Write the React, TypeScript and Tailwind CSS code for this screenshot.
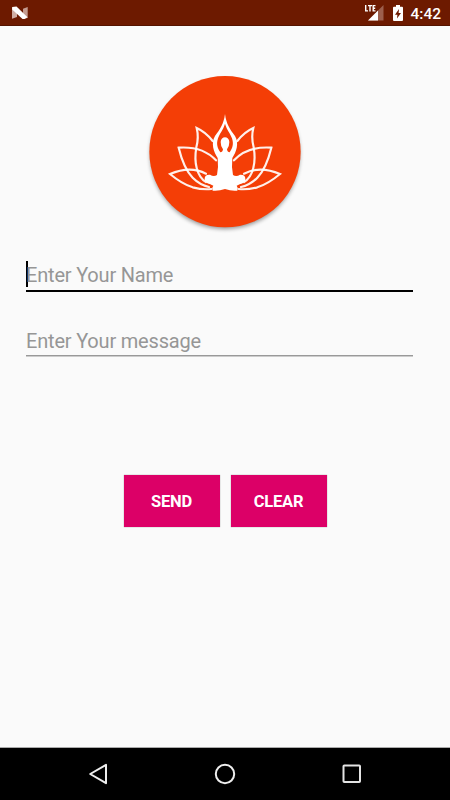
function NougatIcon() {
  return (
    <svg width="18" height="14" viewBox="0 0 18 14" className="block">
      <path d="M1 1.300 6 3v8L1 12.700z" fill="#d0aea4" />
      <path d="M12 2.800 16.700 1v11L12 12.700z" fill="#c49c90" />
      <path d="M1.200 1.100 5.500 .5 16.500 11.300 13.500 13 11.500 12.900 1.200 3.600z" fill="#fff" />
    </svg>
  );
}

function SignalIcon() {
  return (
    <svg width="20" height="18" viewBox="0 0 20 18" className="block">
      <path d="M19.500 1v15.500H4z" fill="#9c5f4d" />
      <path d="M14 6.500v10H4z" fill="#fff" />
      <path d="M0 0h12v8.500H0z" fill="#6d1a00" />
      <path d="M1.700 1v5.900h2.300M4 1.600h4M6 1.600v5.900M11.500 1.600H9.200v5.300h2.300M9.200 4.200h2" fill="none" stroke="#fff" strokeWidth="1.400" />
    </svg>
  );
}

function BatteryIcon() {
  return (
    <svg width="10" height="16" viewBox="0 0 10 16" className="block">
      <path d="M3 0h4v1.700h2q1 0 1 1v12.300q0 1-1 1H1q-1 0-1-1V2.700q0-1 1-1h2z" fill="#fff" />
      <path d="M6 4 2 9.700h2.400L4 13.500 8 7.900H5.600z" fill="#6d1a00" />
    </svg>
  );
}

function Petals() {
  return (
    <g fill="none" stroke="#fff" strokeOpacity=".92" strokeWidth="6.500" strokeLinejoin="miter" strokeLinecap="round">
      <path d="M218 213Q197 186 170 174Q177 202 169 232C161 278 171 321 198 336" />
      <path d="M228 271Q188 228 116 233Q131 295 158 323Q179 344 207 351" />
      <path d="M198 311Q150 286 90 312Q126 342 158 352Q188 360 214 357" />
    </g>
  );
}

function Logo() {
  return (
    <svg width="170" height="170" viewBox="0 0 510 510" className="block">
      <defs>
        <filter id="shade" x="-10%" y="-10%" width="120%" height="120%">
          <feGaussianBlur stdDeviation="6" />
        </filter>
      </defs>
      <circle cx="255" cy="253" r="224" fill="#000" opacity=".42" filter="url(#shade)" />
      <circle cx="255" cy="245" r="227" fill="#f43e06" />
      <Petals />
      <g transform="matrix(-1 0 0 1 510 0)">
        <Petals />
      </g>
      <path
        fill="#fff"
        d="M255 132C259 163 270 178 285 198C298 219 289 246 277 264Q274 292 279 315Q289 321 300 314Q316 313 316 326Q316 339 299 343L290 347Q296 354 292 362Q274 364 255 357Q236 364 218 362Q214 354 220 347L211 343Q194 339 194 326Q194 313 210 314Q221 321 231 315Q236 292 233 264C221 246 212 219 225 198C240 178 251 163 255 132Z"
      />
      <path
        fill="#f43e06"
        d="M255 161C249 181 239 190 234 205C228 223 233 236 241 247Q248 247 249 238Q242 230 242 216C242 197 268 197 268 216Q268 230 261 238Q262 247 269 247C277 236 282 223 276 205C271 190 261 181 255 161Z"
      />
    </svg>
  );
}

export default function App() {
  return (
    <div className="flex h-[800px] w-[450px] flex-col overflow-hidden bg-[#fafafa] font-[Roboto,sans-serif]">
      <header className="flex h-[26px] shrink-0 items-center border-b border-[#551400] bg-[#6d1a00] pr-[9px] pl-[11px] text-white">
        <NougatIcon />
        <div className="ml-auto flex items-center">
          <SignalIcon />
          <div className="ml-[9px]">
            <BatteryIcon />
          </div>
          <span className="ml-[7px] pt-[3px] text-[15.500px] leading-[20px] font-medium">4:42</span>
        </div>
      </header>

      <main className="flex flex-1 flex-col">
        <div className="mt-[44px] flex justify-center">
          <Logo />
        </div>

        <div className="mr-[37px] ml-[26px] flex flex-col tracking-[-0.190px]">
          <div className="mt-[21px] flex h-[31px] items-start border-b-2 border-black">
            <span className="h-[26px] w-[2px] bg-black" />
            <span className="-ml-[2px] pt-[1px] text-[20px] leading-[26px] text-[#969696]">Enter Your Name</span>
          </div>
          <div className="mt-[35px] h-[29px] border-b border-[#999] text-[20px] leading-[28px] text-[#969696] shadow-[0_1px_0_#ccc]">
            Enter Your message
          </div>
        </div>

        <div className="mt-[119px] flex justify-center gap-[11px] text-[16.500px] font-bold tracking-[-0.200px] text-white">
          <button className="h-[52px] w-[96px] bg-[#dc0067] pt-[2px] shadow-[0_0_1px_#888]">SEND</button>
          <button className="h-[52px] w-[96px] bg-[#dc0067] pt-[2px] shadow-[0_0_1px_#888]">CLEAR</button>
        </div>
      </main>

      <nav className="flex h-[53px] shrink-0 justify-between border-t border-[#aaa] bg-black px-[88px]">
        <svg width="22" height="52" viewBox="0 0 22 52">
          <path d="M18 16.800v18.400L2.200 26z" fill="none" stroke="#eee" strokeWidth="2" strokeLinejoin="round" />
        </svg>
        <svg width="22" height="52" viewBox="0 0 22 52">
          <circle cx="11" cy="26" r="9.200" fill="none" stroke="#eee" strokeWidth="2" />
        </svg>
        <svg width="22" height="52" viewBox="0 0 22 52">
          <rect x="3.500" y="17.500" width="16.500" height="16.500" rx=".8" fill="none" stroke="#e4e4e4" strokeWidth="2" />
        </svg>
      </nav>
    </div>
  );
}
